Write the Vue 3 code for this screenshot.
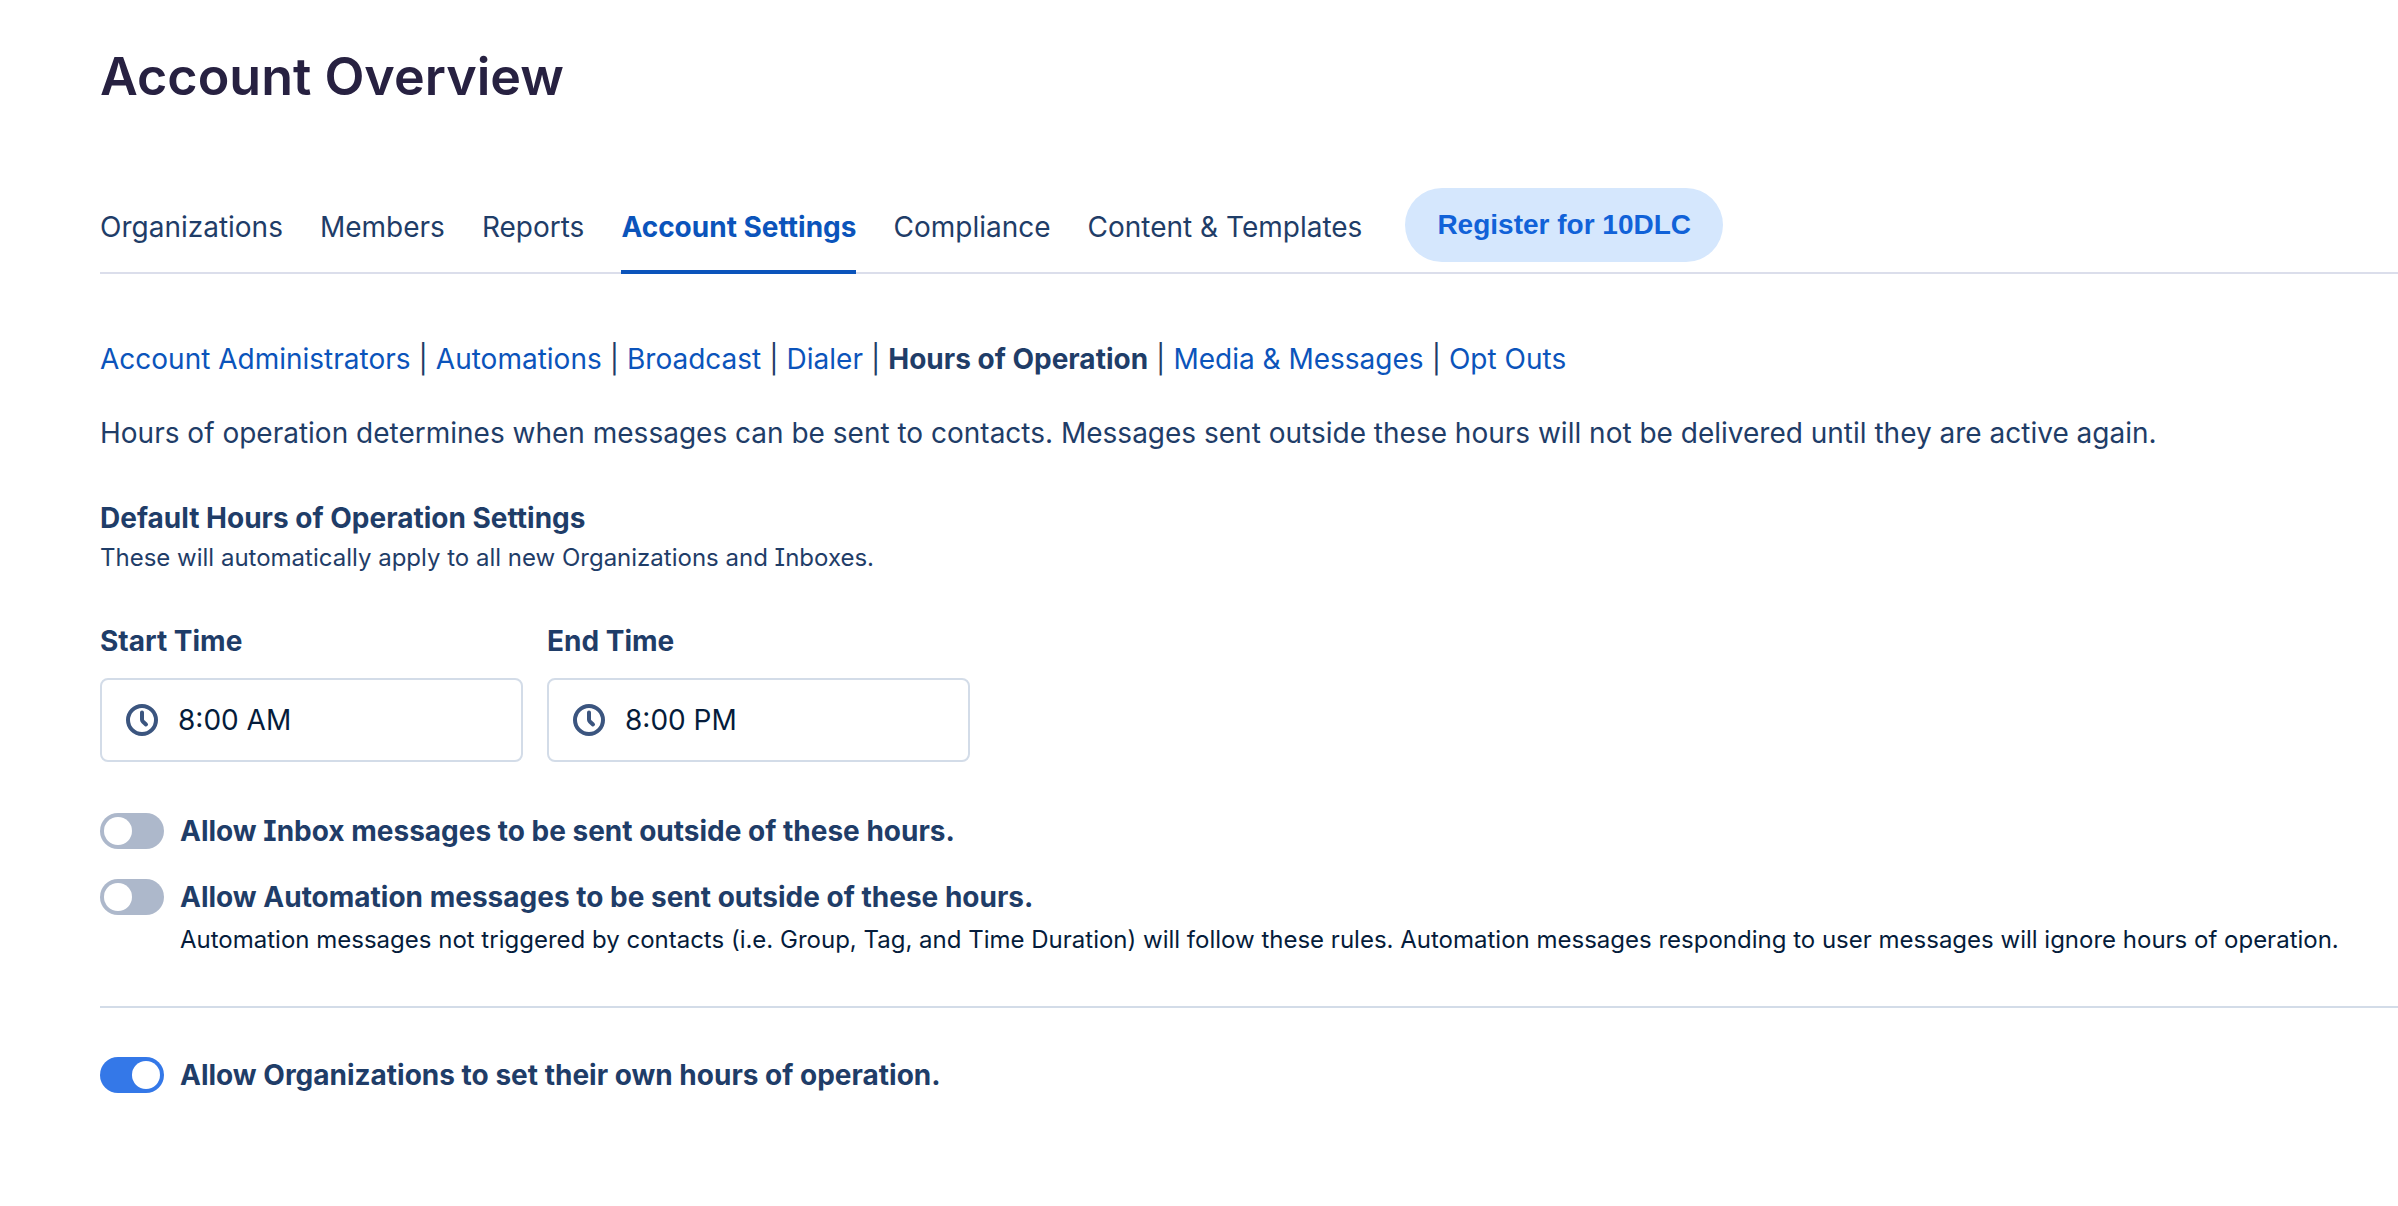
<script setup>
import { ref } from 'vue'

const tabs = ['Organizations', 'Members', 'Reports', 'Account Settings', 'Compliance', 'Content & Templates']
const sections = ['Account Administrators', 'Automations', 'Broadcast', 'Dialer', 'Hours of Operation', 'Media & Messages', 'Opt Outs']
const activeTab = 'Account Settings'
const activeSection = 'Hours of Operation'

const times = ref([
  { id: 'start-time', label: 'Start Time', value: '8:00 AM' },
  { id: 'end-time', label: 'End Time', value: '8:00 PM' },
])
const allowInbox = ref(false)
const allowAutomation = ref(false)
const allowOrganizations = ref(true)
</script>

<template>
  <main class="page">
    <h1 class="title">Account Overview</h1>

    <nav class="tabs" aria-label="Account">
      <a v-for="tab in tabs" :key="tab" href="#" class="tab" :class="{ active: tab === activeTab }">{{ tab }}</a>
      <button type="button" class="register">Register for 10DLC</button>
    </nav>

    <nav class="sections" aria-label="Account settings">
      <template v-for="(section, i) in sections" :key="section">
        <span v-if="i" class="bar">|</span>
        <a href="#" class="section" :class="{ current: section === activeSection }">{{ section }}</a>
      </template>
    </nav>

    <p class="intro">
      Hours of operation determines when messages can be sent to contacts. Messages sent outside these hours will not be delivered until they are active again.
    </p>

    <h2 class="heading">Default Hours of Operation Settings</h2>
    <p class="note">These will automatically apply to all new Organizations and Inboxes.</p>

    <div class="times">
      <div v-for="time in times" :key="time.id" class="field">
        <label class="field-label" :for="time.id">{{ time.label }}</label>
        <div class="box">
          <svg class="clock" viewBox="0 0 32 32" fill="none" stroke="currentColor" stroke-width="4" stroke-linecap="round" stroke-linejoin="round" aria-hidden="true">
            <circle cx="16" cy="16" r="14" />
            <path d="M16 8.5V15.5Q16 16.6 16.8 17.5L20 20.5" />
          </svg>
          <input :id="time.id" v-model="time.value" class="time" type="text" />
        </div>
      </div>
    </div>

    <div class="switches">
      <label class="option">
        <input v-model="allowInbox" type="checkbox" role="switch" class="switch" />
        <span>Allow Inbox messages to be sent outside of these hours.</span>
      </label>
      <div>
        <label class="option">
          <input v-model="allowAutomation" type="checkbox" role="switch" class="switch" aria-describedby="automation-note" />
          <span>Allow Automation messages to be sent outside of these hours.</span>
        </label>
        <p id="automation-note" class="note option-note">
          Automation messages not triggered by contacts (i.e. Group, Tag, and Time Duration) will follow these rules. Automation messages responding to user messages will ignore hours of operation.
        </p>
      </div>
    </div>

    <hr class="rule" />

    <label class="option">
      <input v-model="allowOrganizations" type="checkbox" role="switch" class="switch" />
      <span>Allow Organizations to set their own hours of operation.</span>
    </label>
  </main>
</template>

<style>
body {
  margin: 0;
  background: #fff;
}
</style>

<style scoped>
.page {
  padding: 41px 0 40px 100px;
  font-family: Inter, sans-serif;
  font-feature-settings: 'cv08';
  font-size: 28px;
  line-height: 36px;
  color: #1f3d68;
}

.title {
  margin: 0;
  font-size: 52px;
  line-height: 72px;
  font-weight: 600;
  color: #272141;
}

.tabs {
  display: flex;
  align-items: flex-end;
  gap: 37px;
  margin-top: 75px;
  border-bottom: 2px solid #dbdeeb;
}

.tab {
  padding: 0 0 25px;
  margin-bottom: -2px;
  border-bottom: 4px solid transparent;
  color: inherit;
  text-decoration: none;
  white-space: nowrap;
}

.tab.active {
  border-color: #0b54bb;
  color: #0b54bb;
  font-weight: 700;
}

.register {
  height: 74px;
  margin: 0 0 10px 6px;
  padding: 0 32px;
  border: 0;
  border-radius: 37px;
  background: #d5e7fd;
  color: #1162d8;
  font: 700 28px 'Liberation Sans', Arial, sans-serif;
  white-space: nowrap;
}

.sections {
  display: flex;
  gap: 8px;
  margin-top: 67px;
}

.section {
  color: #0b54bb;
  text-decoration: none;
  white-space: nowrap;
}

.section.current {
  color: #1f3d68;
  font-weight: 700;
}

.intro {
  margin: 38px 0 0;
}

.heading {
  margin: 49px 0 0;
  font-size: 28px;
  line-height: 36px;
  font-weight: 700;
}

.note {
  margin: 4px 0 0;
  font-size: 24px;
  line-height: 36px;
}

.times {
  display: flex;
  gap: 24px;
  margin-top: 47px;
}

.field {
  width: 423px;
}

.field-label {
  display: block;
  font-weight: 700;
}

.box {
  display: flex;
  align-items: center;
  gap: 20px;
  height: 84px;
  margin-top: 19px;
  padding: 0 24px;
  box-sizing: border-box;
  border: 2px solid #d3dce8;
  border-radius: 8px;
}

.clock {
  flex: none;
  width: 32px;
  height: 32px;
  color: #3b557f;
}

.time {
  flex: 1;
  min-width: 0;
  padding: 0;
  border: 0;
  outline: 0;
  background: none;
  color: #051c3b;
  font: inherit;
}

.switches {
  display: flex;
  flex-direction: column;
  gap: 30px;
  margin-top: 51px;
}

.option {
  display: flex;
  align-items: center;
  gap: 16px;
  font-weight: 700;
}

.switch {
  flex: none;
  width: 64px;
  height: 36px;
  margin: 0;
  padding: 4px;
  box-sizing: border-box;
  appearance: none;
  display: flex;
  border-radius: 18px;
  background: #adb8cb;
}

.switch::before {
  content: '';
  width: 28px;
  height: 28px;
  border-radius: 50%;
  background: #fff;
}

.switch:checked {
  justify-content: flex-end;
  background: #3478e8;
}

.option-note {
  margin-top: 7px;
  padding-left: 80px;
  color: #051c3b;
}

.rule {
  height: 2px;
  margin: 48px 0 49px;
  border: 0;
  background: #d3dce8;
}
</style>
